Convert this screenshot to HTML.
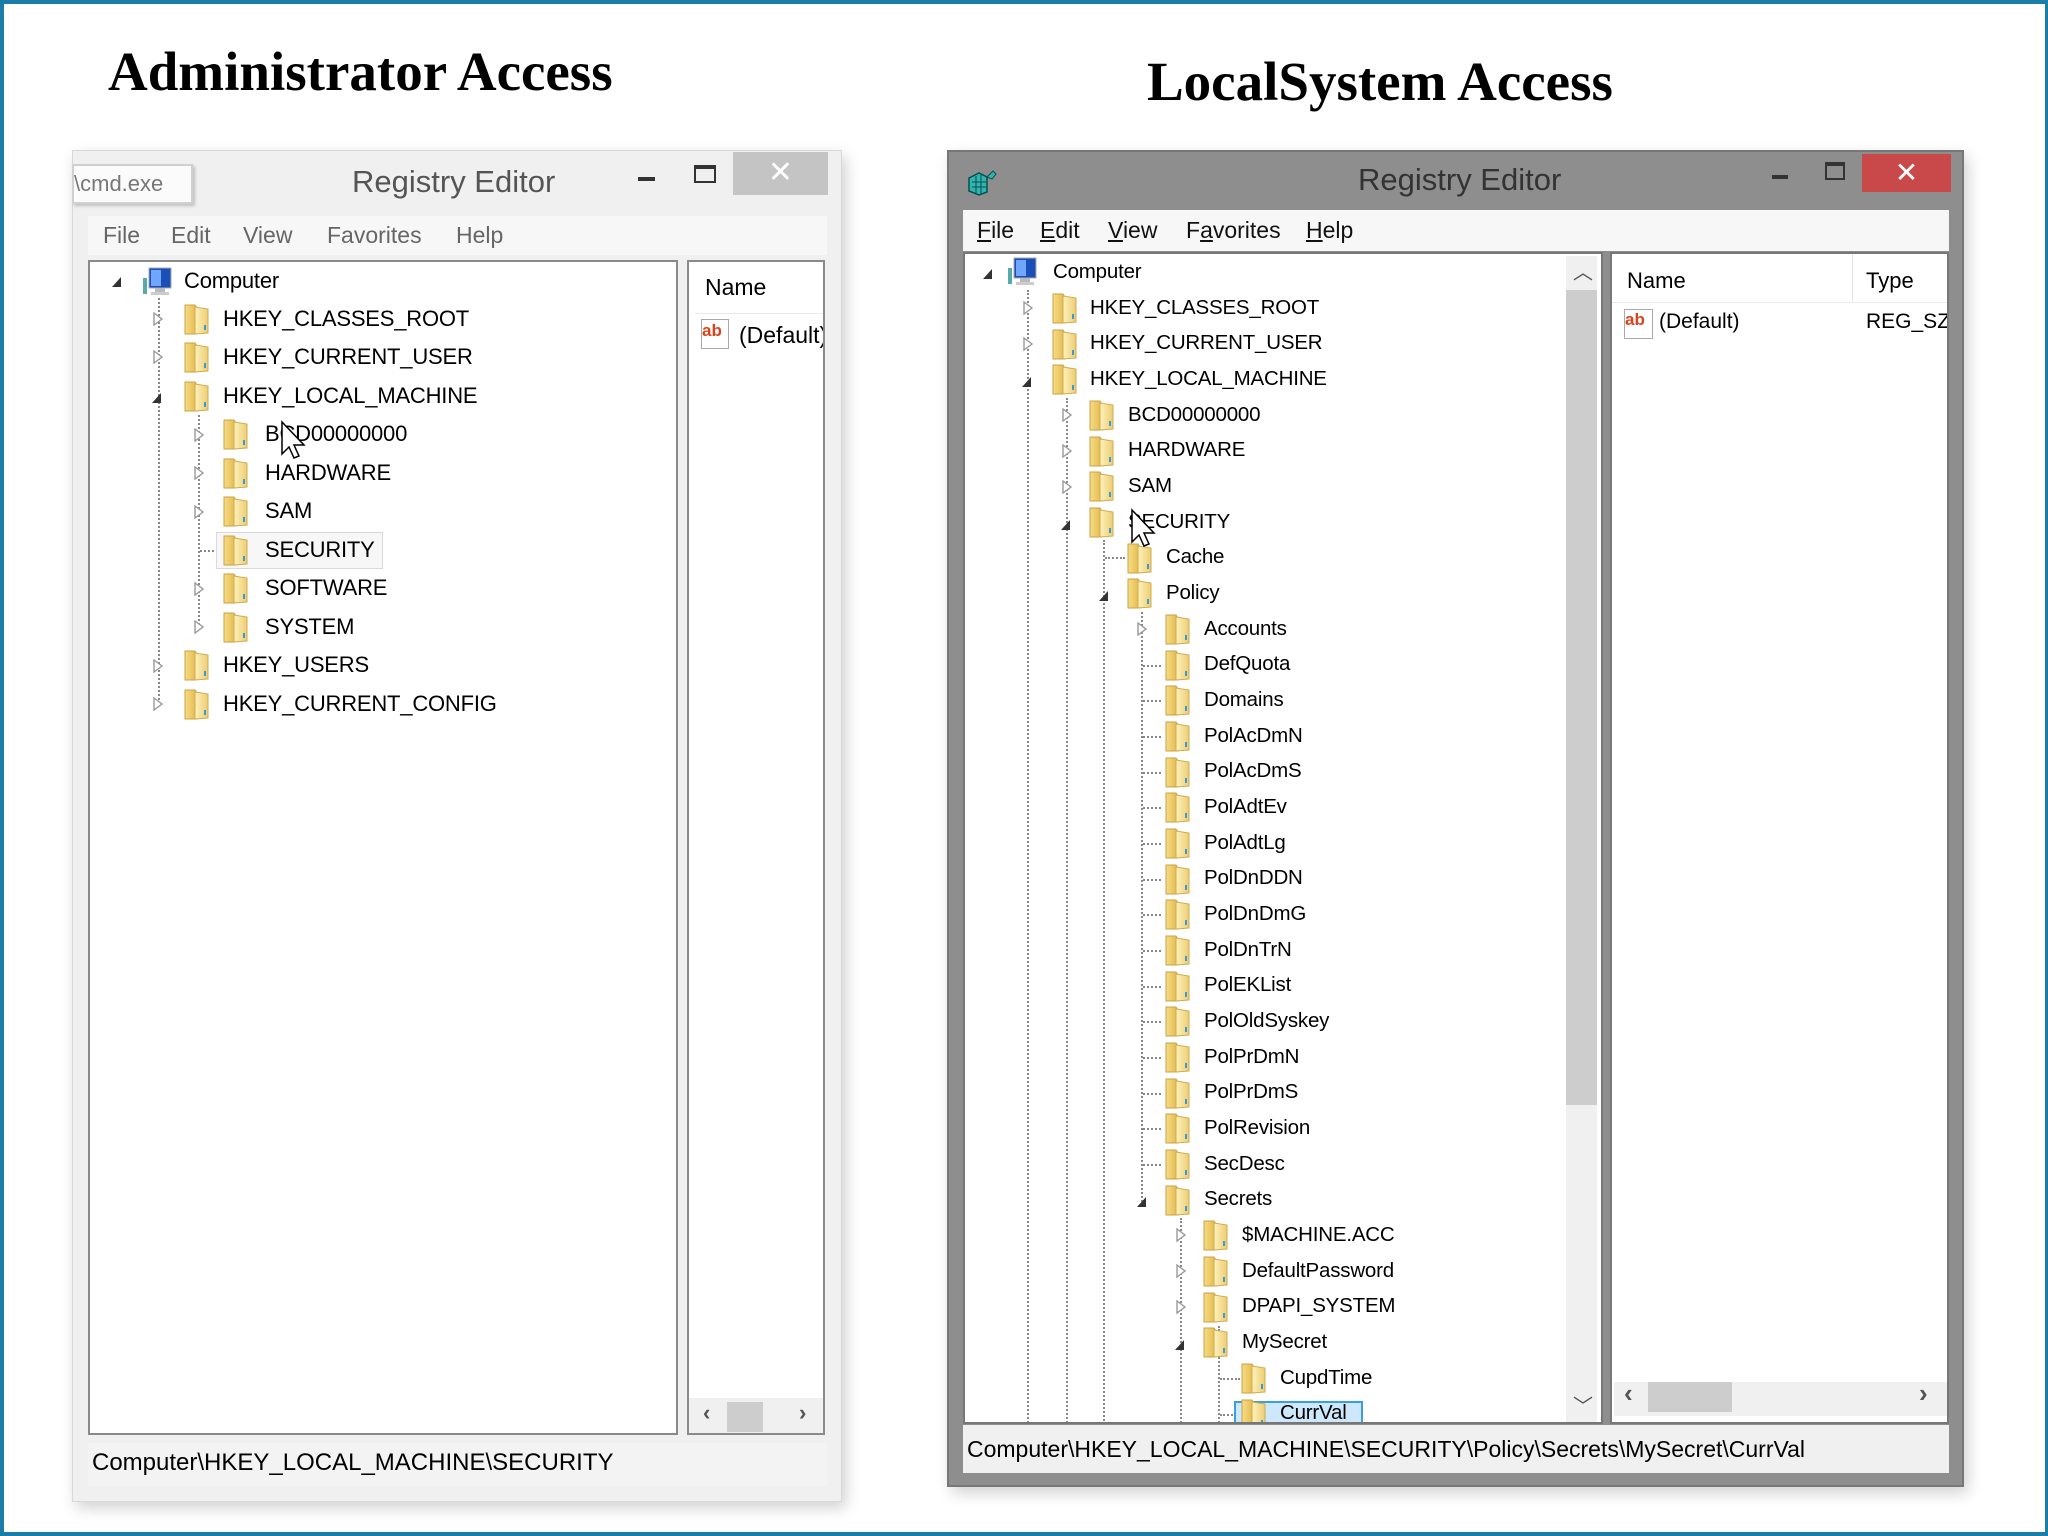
<!DOCTYPE html>
<html><head><meta charset="utf-8">
<style>
*{margin:0;padding:0;box-sizing:border-box}
body{width:2048px;height:1536px;background:#fff;position:relative;overflow:hidden;font-family:"Liberation Sans",sans-serif;color:#000}
.abs{position:absolute}
.frame{position:absolute;left:0;top:0;width:2048px;height:1536px;border:4px solid #1a7ea8;border-right-width:3px;border-bottom-width:4px}
h1{position:absolute;font-family:"Liberation Serif",serif;font-weight:bold;font-size:55px;white-space:nowrap}
.row{position:absolute;height:34px;line-height:34px;white-space:nowrap}
.L .row{font-size:22px;letter-spacing:-0.2px}
.R .row{font-size:20.5px;letter-spacing:-0.2px}
.fold{position:absolute;width:27px;height:32px}
.exp{position:absolute;width:10px;height:14px}
.vl{position:absolute;width:0;border-left:2px dotted #888}
.hl{position:absolute;height:0;border-top:2px dotted #888}
.menu span{position:absolute;white-space:nowrap}
</style></head><body>
<div class="frame"></div>
<h1 style="left:108px;top:40px">Administrator Access</h1>
<h1 style="left:1147px;top:50px">LocalSystem Access</h1>

<svg width="0" height="0" style="position:absolute">
<defs>
<linearGradient id="fg" x1="0" y1="0" x2="1" y2="0"><stop offset="0" stop-color="#f6dc86"/><stop offset="1" stop-color="#e3b84a"/></linearGradient>
<linearGradient id="fg2" x1="0" y1="0" x2="1" y2="0"><stop offset="0" stop-color="#fff2bd"/><stop offset="1" stop-color="#eccd72"/></linearGradient>
<symbol id="folder" viewBox="0 0 27 32"><path d="M2 2h10l2 3v26H2z" fill="url(#fg)" stroke="#caa245" stroke-width="1"/><path d="M12 4l13 2v24l-13 1z" fill="url(#fg2)" stroke="#d1ab4e" stroke-width="1"/><rect x="21" y="22" width="2" height="5" fill="#3a9ad9"/></symbol>
<symbol id="closed" viewBox="0 0 10 14"><path d="M1 1l8 6-8 6z" fill="#fff" stroke="#9a9a9a" stroke-width="1.4"/></symbol>
<symbol id="open" viewBox="0 0 10 14"><path d="M9 3v10H0z" fill="#333"/></symbol>
</defs></svg>

<!-- LEFT WINDOW -->
<div class="abs" style="left:72px;top:150px;width:770px;height:1352px;background:#f0f0f0;border:1px solid #d8d8d8;box-shadow:4px 6px 14px rgba(0,0,0,.18)"></div>
<div class="abs" style="left:352px;top:164px;font-size:31px;color:#555">Registry Editor</div>
<div class="abs" style="left:638px;top:177px;width:17px;height:4px;background:#333"></div>
<div class="abs" style="left:694px;top:165px;width:22px;height:18px;border:2px solid #333;border-top-width:4px"></div>
<div class="abs" style="left:733px;top:152px;width:95px;height:43px;background:#c4c4c4;color:#fff;font-size:30px;text-align:center;line-height:42px">✕</div>
<div class="abs" style="left:72px;top:164px;width:121px;height:40px;background:#fbfbfb;border:2px solid #d0d0d0;box-shadow:2px 2px 3px rgba(0,0,0,.2);font-size:22px;color:#777;line-height:36px">\cmd.exe</div>
<div class="abs" style="left:88px;top:216px;width:739px;height:39px;background:#f7f7f7"></div>
<div class="menu" style="font-size:23px;color:#666">
<span style="left:103px;top:222px">File</span><span style="left:171px;top:222px">Edit</span><span style="left:243px;top:222px">View</span><span style="left:327px;top:222px">Favorites</span><span style="left:456px;top:222px">Help</span></div>
<div class="abs L" style="left:88px;top:260px;width:590px;height:1175px;background:#fff;border:2px solid #8a8a8a;overflow:hidden"></div>
<div class="L">
<div class="vl" style="left:158px;top:298px;height:406px"></div>
<div class="vl" style="left:198px;top:415px;height:210px"></div>
<div class="hl" style="left:200px;top:550px;width:18px"></div>
<div class="row" style="left:184px;top:264px"><span>Computer</span></div>
<svg class="exp" width="10" height="14" style="left:112px;top:274px"><use href="#open"/></svg>
<svg class="abs" style="left:140px;top:266px" width="34" height="32" viewBox="0 0 34 32"><rect x="9" y="2" width="22" height="20" fill="#1b4fb8" stroke="#aaa"/><rect x="11" y="4" width="10" height="16" fill="#6fa7ff"/><rect x="15" y="22" width="10" height="4" fill="#bbb"/><rect x="11" y="26" width="18" height="3" fill="#ccc"/><rect x="3" y="12" width="4" height="16" fill="#5aa" /></svg>
<svg class="exp" width="10" height="14" style="left:153px;top:312px"><use href="#closed"/></svg><svg class="fold" width="27" height="32" style="left:183px;top:303px"><use href="#folder"/></svg><div class="row" style="left:223px;top:302px">HKEY_CLASSES_ROOT</div>
<svg class="exp" width="10" height="14" style="left:153px;top:350px"><use href="#closed"/></svg><svg class="fold" width="27" height="32" style="left:183px;top:341px"><use href="#folder"/></svg><div class="row" style="left:223px;top:340px">HKEY_CURRENT_USER</div>
<svg class="exp" width="10" height="14" style="left:152px;top:390px"><use href="#open"/></svg><svg class="fold" width="27" height="32" style="left:183px;top:380px"><use href="#folder"/></svg><div class="row" style="left:223px;top:379px">HKEY_LOCAL_MACHINE</div>
<svg class="exp" width="10" height="14" style="left:194px;top:428px"><use href="#closed"/></svg><svg class="fold" width="27" height="32" style="left:222px;top:418px"><use href="#folder"/></svg><div class="row" style="left:265px;top:417px">BCD00000000</div>
<svg class="exp" width="10" height="14" style="left:194px;top:466px"><use href="#closed"/></svg><svg class="fold" width="27" height="32" style="left:222px;top:457px"><use href="#folder"/></svg><div class="row" style="left:265px;top:456px">HARDWARE</div>
<svg class="exp" width="10" height="14" style="left:194px;top:505px"><use href="#closed"/></svg><svg class="fold" width="27" height="32" style="left:222px;top:495px"><use href="#folder"/></svg><div class="row" style="left:265px;top:494px">SAM</div>
<div class="abs" style="left:216px;top:532px;width:167px;height:37px;border:1px solid #d9d9d9;background:#f7f7f7"></div>
<svg class="fold" width="27" height="32" style="left:222px;top:534px"><use href="#folder"/></svg><div class="row" style="left:265px;top:533px">SECURITY</div>
<svg class="exp" width="10" height="14" style="left:194px;top:582px"><use href="#closed"/></svg><svg class="fold" width="27" height="32" style="left:222px;top:572px"><use href="#folder"/></svg><div class="row" style="left:265px;top:571px">SOFTWARE</div>
<svg class="exp" width="10" height="14" style="left:194px;top:620px"><use href="#closed"/></svg><svg class="fold" width="27" height="32" style="left:222px;top:611px"><use href="#folder"/></svg><div class="row" style="left:265px;top:610px">SYSTEM</div>
<svg class="exp" width="10" height="14" style="left:153px;top:659px"><use href="#closed"/></svg><svg class="fold" width="27" height="32" style="left:183px;top:649px"><use href="#folder"/></svg><div class="row" style="left:223px;top:648px">HKEY_USERS</div>
<svg class="exp" width="10" height="14" style="left:153px;top:697px"><use href="#closed"/></svg><svg class="fold" width="27" height="32" style="left:183px;top:688px"><use href="#folder"/></svg><div class="row" style="left:223px;top:687px">HKEY_CURRENT_CONFIG</div>
<svg class="abs" style="left:280px;top:420px" width="26" height="42" viewBox="0 0 26 42"><path d="M2 2v32l7-7 5 11 5-2-5-11h10z" fill="#fff" stroke="#000" stroke-width="1.5"/></svg>
</div>
<div class="abs" style="left:687px;top:260px;width:138px;height:1175px;background:#fff;border:2px solid #8a8a8a;overflow:hidden">
<div class="abs" style="left:16px;top:12px;font-size:23px">Name</div>
<div class="abs" style="left:6px;top:51px;width:130px;border-top:1px solid #eaeaea"></div>
<div class="abs" style="left:12px;top:57px;width:28px;height:30px;border:1px solid #aaa;background:#fff;color:#d8451c;font-weight:bold;font-size:17px;line-height:22px">ab</div>
<div class="abs" style="left:50px;top:60px;font-size:23px;white-space:nowrap">(Default)</div>
<div class="abs" style="left:0;top:1136px;width:136px;height:37px;background:#f0f0f0"></div>
<div class="abs" style="left:38px;top:1140px;width:36px;height:30px;background:#cdcdcd"></div>
<div class="abs" style="left:14px;top:1138px;font-size:22px;color:#555;font-weight:bold">‹</div>
<div class="abs" style="left:110px;top:1138px;font-size:22px;color:#555;font-weight:bold">›</div>
</div>
<div class="abs" style="left:88px;top:1443px;width:739px;height:43px;background:#f3f3f3"></div>
<div class="abs" style="left:92px;top:1449px;font-size:24px;white-space:nowrap">Computer\HKEY_LOCAL_MACHINE\SECURITY</div>

<!-- RIGHT WINDOW -->
<div class="abs" style="left:947px;top:150px;width:1017px;height:1337px;background:#8e8e8e;border:2px solid #777;box-shadow:4px 6px 14px rgba(0,0,0,.18)"></div>
<svg class="abs" style="left:966px;top:164px" width="34" height="32" viewBox="0 0 34 32"><path d="M3 14l10-5 8 4v15l-8 3-10-4z" fill="#2fb5b0" stroke="#0b4d4d" stroke-width="1.5"/><path d="M21 13l6-6 3 3-4 5z" fill="#2fb5b0" stroke="#0b4d4d"/><path d="M6 18h14M6 23h14M10 12v17M15 11v19" stroke="#0b4d4d" stroke-width="1"/></svg>
<div class="abs" style="left:1358px;top:162px;font-size:31px;color:#333">Registry Editor</div>
<div class="abs" style="left:1772px;top:175px;width:16px;height:4px;background:#333"></div>
<div class="abs" style="left:1825px;top:162px;width:20px;height:18px;border:2px solid #333;border-top-width:4px"></div>
<div class="abs" style="left:1862px;top:154px;width:89px;height:38px;background:#c9494a;color:#fff;font-size:28px;text-align:center;line-height:38px">✕</div>
<div class="abs" style="left:963px;top:210px;width:986px;height:41px;background:#f7f7f7"></div>
<div class="menu" style="font-size:23px;color:#111">
<span style="left:977px;top:217px"><u>F</u>ile</span><span style="left:1040px;top:217px"><u>E</u>dit</span><span style="left:1108px;top:217px"><u>V</u>iew</span><span style="left:1186px;top:217px">F<u>a</u>vorites</span><span style="left:1306px;top:217px"><u>H</u>elp</span></div>
<div class="abs" style="left:963px;top:252px;width:640px;height:1172px;background:#fff;border:2px solid #777"></div>
<div class="abs" style="left:1566px;top:256px;width:31px;height:1166px;background:#f0f0f0"></div>
<div class="abs" style="left:1566px;top:290px;width:31px;height:815px;background:#cdcdcd"></div>
<div class="abs" style="left:1573px;top:256px;font-size:20px;color:#555">︿</div>
<div class="abs" style="left:1573px;top:1390px;font-size:20px;color:#555">﹀</div>
<div class="R" style="position:absolute;left:965px;top:254px;width:600px;height:1168px;overflow:hidden">
<div style="position:absolute;left:-965px;top:-254px;width:2048px;height:1536px">
<div class="vl" style="left:1027px;top:290px;height:1200px"></div>
<div class="vl" style="left:1066px;top:398px;height:1100px"></div>
<div class="vl" style="left:1103px;top:540px;height:1000px"></div>
<div class="hl" style="left:1105px;top:557px;width:20px"></div>
<div class="vl" style="left:1141px;top:612px;height:590px"></div>
<div class="vl" style="left:1180px;top:1218px;height:300px"></div>
<div class="vl" style="left:1218px;top:1326px;height:200px"></div>
<div class="hl" style="left:1220px;top:1378px;width:20px"></div>
<div class="hl" style="left:1220px;top:1414px;width:20px"></div>

<svg class="exp" width="10" height="14" style="left:983px;top:266px"><use href="#open"/></svg>
<svg class="abs" style="left:1005px;top:256px" width="34" height="32" viewBox="0 0 34 32"><rect x="9" y="2" width="22" height="20" fill="#1b4fb8" stroke="#aaa"/><rect x="11" y="4" width="10" height="16" fill="#6fa7ff"/><rect x="15" y="22" width="10" height="4" fill="#bbb"/><rect x="11" y="26" width="18" height="3" fill="#ccc"/><rect x="3" y="12" width="4" height="16" fill="#5aa"/></svg>
<div class="row" style="left:1053px;top:255px">Computer</div>

<svg class="exp" width="10" height="14" style="left:1023px;top:301px"><use href="#closed"/></svg><svg class="fold" width="27" height="32" style="left:1051px;top:292px"><use href="#folder"/></svg><div class="row" style="left:1090px;top:291px">HKEY_CLASSES_ROOT</div>
<svg class="exp" width="10" height="14" style="left:1023px;top:337px"><use href="#closed"/></svg><svg class="fold" width="27" height="32" style="left:1051px;top:328px"><use href="#folder"/></svg><div class="row" style="left:1090px;top:326px">HKEY_CURRENT_USER</div>
<svg class="exp" width="10" height="14" style="left:1022px;top:374px"><use href="#open"/></svg><svg class="fold" width="27" height="32" style="left:1051px;top:363px"><use href="#folder"/></svg><div class="row" style="left:1090px;top:362px">HKEY_LOCAL_MACHINE</div>
<svg class="exp" width="10" height="14" style="left:1062px;top:408px"><use href="#closed"/></svg><svg class="fold" width="27" height="32" style="left:1088px;top:399px"><use href="#folder"/></svg><div class="row" style="left:1128px;top:398px">BCD00000000</div>
<svg class="exp" width="10" height="14" style="left:1062px;top:444px"><use href="#closed"/></svg><svg class="fold" width="27" height="32" style="left:1088px;top:435px"><use href="#folder"/></svg><div class="row" style="left:1128px;top:433px">HARDWARE</div>
<svg class="exp" width="10" height="14" style="left:1062px;top:480px"><use href="#closed"/></svg><svg class="fold" width="27" height="32" style="left:1088px;top:470px"><use href="#folder"/></svg><div class="row" style="left:1128px;top:469px">SAM</div>
<svg class="exp" width="10" height="14" style="left:1061px;top:517px"><use href="#open"/></svg><svg class="fold" width="27" height="32" style="left:1088px;top:506px"><use href="#folder"/></svg><div class="row" style="left:1128px;top:505px">SECURITY</div>
<svg class="fold" width="27" height="32" style="left:1126px;top:542px"><use href="#folder"/></svg><div class="row" style="left:1166px;top:540px">Cache</div>
<svg class="exp" width="10" height="14" style="left:1099px;top:588px"><use href="#open"/></svg><svg class="fold" width="27" height="32" style="left:1126px;top:577px"><use href="#folder"/></svg><div class="row" style="left:1166px;top:576px">Policy</div>
<svg class="exp" width="10" height="14" style="left:1137px;top:622px"><use href="#closed"/></svg><svg class="fold" width="27" height="32" style="left:1164px;top:613px"><use href="#folder"/></svg><div class="row" style="left:1204px;top:612px">Accounts</div>

<svg class="fold" width="27" height="32" style="left:1164px;top:649px"><use href="#folder"/></svg><div class="row" style="left:1204px;top:647px">DefQuota</div><div class="hl" style="left:1143px;top:665px;width:18px"></div>
<svg class="fold" width="27" height="32" style="left:1164px;top:684px"><use href="#folder"/></svg><div class="row" style="left:1204px;top:683px">Domains</div><div class="hl" style="left:1143px;top:700px;width:18px"></div>
<svg class="fold" width="27" height="32" style="left:1164px;top:720px"><use href="#folder"/></svg><div class="row" style="left:1204px;top:719px">PolAcDmN</div><div class="hl" style="left:1143px;top:736px;width:18px"></div>
<svg class="fold" width="27" height="32" style="left:1164px;top:756px"><use href="#folder"/></svg><div class="row" style="left:1204px;top:754px">PolAcDmS</div><div class="hl" style="left:1143px;top:772px;width:18px"></div>
<svg class="fold" width="27" height="32" style="left:1164px;top:791px"><use href="#folder"/></svg><div class="row" style="left:1204px;top:790px">PolAdtEv</div><div class="hl" style="left:1143px;top:807px;width:18px"></div>
<svg class="fold" width="27" height="32" style="left:1164px;top:827px"><use href="#folder"/></svg><div class="row" style="left:1204px;top:826px">PolAdtLg</div><div class="hl" style="left:1143px;top:843px;width:18px"></div>
<svg class="fold" width="27" height="32" style="left:1164px;top:863px"><use href="#folder"/></svg><div class="row" style="left:1204px;top:861px">PolDnDDN</div><div class="hl" style="left:1143px;top:879px;width:18px"></div>
<svg class="fold" width="27" height="32" style="left:1164px;top:898px"><use href="#folder"/></svg><div class="row" style="left:1204px;top:897px">PolDnDmG</div><div class="hl" style="left:1143px;top:914px;width:18px"></div>
<svg class="fold" width="27" height="32" style="left:1164px;top:934px"><use href="#folder"/></svg><div class="row" style="left:1204px;top:933px">PolDnTrN</div><div class="hl" style="left:1143px;top:950px;width:18px"></div>
<svg class="fold" width="27" height="32" style="left:1164px;top:970px"><use href="#folder"/></svg><div class="row" style="left:1204px;top:968px">PolEKList</div><div class="hl" style="left:1143px;top:986px;width:18px"></div>
<svg class="fold" width="27" height="32" style="left:1164px;top:1005px"><use href="#folder"/></svg><div class="row" style="left:1204px;top:1004px">PolOldSyskey</div><div class="hl" style="left:1143px;top:1021px;width:18px"></div>
<svg class="fold" width="27" height="32" style="left:1164px;top:1041px"><use href="#folder"/></svg><div class="row" style="left:1204px;top:1040px">PolPrDmN</div><div class="hl" style="left:1143px;top:1057px;width:18px"></div>
<svg class="fold" width="27" height="32" style="left:1164px;top:1077px"><use href="#folder"/></svg><div class="row" style="left:1204px;top:1075px">PolPrDmS</div><div class="hl" style="left:1143px;top:1093px;width:18px"></div>
<svg class="fold" width="27" height="32" style="left:1164px;top:1112px"><use href="#folder"/></svg><div class="row" style="left:1204px;top:1111px">PolRevision</div><div class="hl" style="left:1143px;top:1128px;width:18px"></div>
<svg class="fold" width="27" height="32" style="left:1164px;top:1148px"><use href="#folder"/></svg><div class="row" style="left:1204px;top:1147px">SecDesc</div><div class="hl" style="left:1143px;top:1164px;width:18px"></div>
<svg class="exp" width="10" height="14" style="left:1137px;top:1194px"><use href="#open"/></svg><svg class="fold" width="27" height="32" style="left:1164px;top:1184px"><use href="#folder"/></svg><div class="row" style="left:1204px;top:1182px">Secrets</div>
<svg class="exp" width="10" height="14" style="left:1176px;top:1228px"><use href="#closed"/></svg><svg class="fold" width="27" height="32" style="left:1202px;top:1219px"><use href="#folder"/></svg><div class="row" style="left:1242px;top:1218px">$MACHINE.ACC</div>
<svg class="exp" width="10" height="14" style="left:1176px;top:1264px"><use href="#closed"/></svg><svg class="fold" width="27" height="32" style="left:1202px;top:1255px"><use href="#folder"/></svg><div class="row" style="left:1242px;top:1254px">DefaultPassword</div>
<svg class="exp" width="10" height="14" style="left:1176px;top:1300px"><use href="#closed"/></svg><svg class="fold" width="27" height="32" style="left:1202px;top:1291px"><use href="#folder"/></svg><div class="row" style="left:1242px;top:1289px">DPAPI_SYSTEM</div>
<svg class="exp" width="10" height="14" style="left:1175px;top:1337px"><use href="#open"/></svg><svg class="fold" width="27" height="32" style="left:1202px;top:1326px"><use href="#folder"/></svg><div class="row" style="left:1242px;top:1325px">MySecret</div>
<svg class="fold" width="27" height="32" style="left:1240px;top:1362px"><use href="#folder"/></svg><div class="row" style="left:1280px;top:1361px">CupdTime</div>
<div class="abs" style="left:1234px;top:1401px;width:129px;height:36px;border:2px solid #3c9ee0;background:#cde8fb"></div>
<svg class="fold" width="27" height="32" style="left:1240px;top:1398px"><use href="#folder"/></svg><div class="row" style="left:1280px;top:1396px">CurrVal</div>
<svg class="abs" style="left:1130px;top:508px" width="26" height="42" viewBox="0 0 26 42"><path d="M2 2v32l7-7 5 11 5-2-5-11h10z" fill="#fff" stroke="#000" stroke-width="1.5"/></svg>
</div></div>

<div class="abs" style="left:1610px;top:252px;width:339px;height:1172px;background:#fff;border:2px solid #777;overflow:hidden">
<div class="abs" style="left:15px;top:14px;font-size:22px">Name</div>
<div class="abs" style="left:254px;top:14px;font-size:22px">Type</div>
<div class="abs" style="left:240px;top:0;height:48px;border-left:1px solid #e6e6e6"></div>
<div class="abs" style="left:0;top:48px;width:340px;border-top:1px solid #ececec"></div>
<div class="abs" style="left:12px;top:55px;width:29px;height:30px;border:1px solid #aaa;background:#fff;color:#d8451c;font-weight:bold;font-size:17px;line-height:20px">ab</div>
<div class="abs" style="left:47px;top:56px;font-size:21px;white-space:nowrap">(Default)</div>
<div class="abs" style="left:254px;top:56px;font-size:21px;white-space:nowrap">REG_SZ</div>
<div class="abs" style="left:2px;top:1128px;width:333px;height:34px;background:#f0f0f0"></div>
<div class="abs" style="left:36px;top:1128px;width:84px;height:30px;background:#cdcdcd"></div>
<div class="abs" style="left:12px;top:1124px;font-size:26px;color:#555;font-weight:bold">‹</div>
<div class="abs" style="left:307px;top:1124px;font-size:26px;color:#555;font-weight:bold">›</div>
</div>
<div class="abs" style="left:963px;top:1425px;width:986px;height:48px;background:#f0f0f0"></div>
<div class="abs" style="left:967px;top:1436px;font-size:23px;white-space:nowrap">Computer\HKEY_LOCAL_MACHINE\SECURITY\Policy\Secrets\MySecret\CurrVal</div>
</body></html>
